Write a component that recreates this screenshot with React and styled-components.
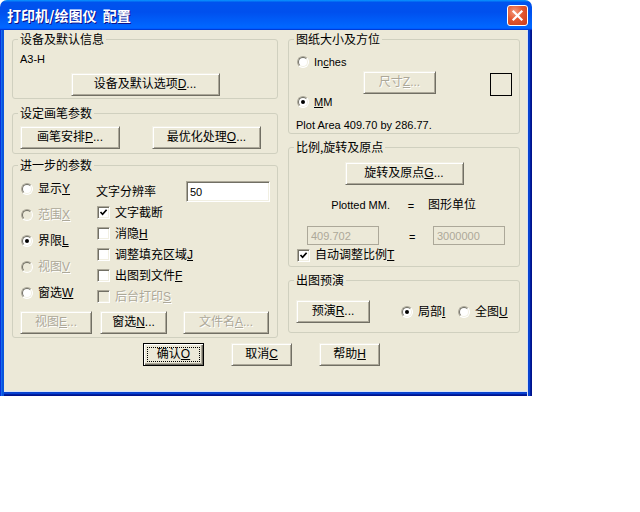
import React from 'react';
import styled, { createGlobalStyle, css } from 'styled-components';

const GlobalStyle = createGlobalStyle`
  html, body { margin: 0; padding: 0; background: #ffffff; }
  body {
    font-family: "Liberation Sans", "Noto Sans CJK SC", sans-serif;
    font-size: 12px;
    line-height: 14px;
    color: #000;
  }
  * { box-sizing: border-box; }
  u { text-underline-offset: 1px; }
`;

const Window = styled.div`
  width: 532px;
  height: 396px;
  display: flex;
  flex-direction: column;
  background: #ece9d8;
  border-radius: 7px 7px 0 0;
  overflow: hidden;
`;

const TitleBar = styled.div`
  height: 30px;
  flex: none;
  display: flex;
  align-items: center;
  justify-content: space-between;
  padding: 0 4px 0 7px;
  background: linear-gradient(180deg, #0997ff, #0053ee 8%, #0050ee 40%, #0066ff 88%, #0066ff 93%, #005bff 95%, #003dd7 96%, #003dd7);
`;

const Title = styled.div`
  font-family: "Noto Sans CJK SC", sans-serif;
  font-weight: 700;
  font-size: 14px;
  color: #fff;
  white-space: pre;
  text-shadow: 1px 1px 0 #0f1089;
`;

const CloseButton = styled.div`
  width: 21px;
  height: 21px;
  border: 1px solid #fff;
  border-radius: 3px;
  display: flex;
  align-items: center;
  justify-content: center;
  background: radial-gradient(circle at 35% 30%, #f39a7c 0%, #e4572f 45%, #c93b1b 100%);
`;

const Body = styled.div`
  flex: 1;
  padding: 2px 12px 0 12px;
  box-shadow:
    inset 1px 0 #0831d9, inset 2px 0 #166aee, inset 4px 0 #0855dd,
    inset -1px 0 #00138c, inset -2px 0 #001ea0, inset -4px 0 #0842d0, inset -5px 0 #d8e2f6,
    inset 0 -1px #00138c, inset 0 -2px #001ea0, inset 0 -4px #0842d0, inset 0 -5px #d8e2f6;
`;

const Columns = styled.div`
  display: grid;
  grid-template-columns: 266px 232px;
  column-gap: 10px;
  align-items: start;
`;

const Column = styled.div`
  display: flex;
  flex-direction: column;
`;

const Group = styled.fieldset`
  margin: ${p => p.$mt || 0}px 0 0 0;
  padding: 0 7px ${p => p.$pb || 0}px 7px;
  border: 1px solid #d0d0bf;
  border-radius: 3px;
  min-width: 0;
`;

const Legend = styled.legend`
  padding: 0 2px;
  margin-left: -2px;
  font-size: 12px;
  line-height: 14px;
  font-family: "Noto Sans CJK SC", sans-serif;
`;

const Text = styled.div`
  margin-top: ${p => p.$mt || 0}px;
  font-size: ${p => (p.$latin ? 11 : 12)}px;
  line-height: 14px;
  white-space: nowrap;
`;

const Button = styled.button`
  position: relative;
  display: flex;
  align-items: center;
  justify-content: center;
  flex: none;
  width: ${p => p.$w}px;
  height: 23px;
  margin: ${p => p.$mt || 0}px ${p => (p.$center ? 'auto' : '0')} 0 ${p => (p.$center ? 'auto' : `${p.$ml || 0}px`)};
  padding: 0 0 1px 0;
  font-family: "Liberation Sans", "Noto Sans CJK SC", sans-serif;
  font-size: 12px;
  line-height: 14px;
  white-space: nowrap;
  color: #000;
  background: #ece9d8;
  border: 1px solid;
  border-color: #f1efe2 #716f64 #716f64 #f1efe2;
  box-shadow: inset 1px 1px #ffffff, inset -1px -1px #aca899;
  border-radius: 0;
  ${p => p.disabled && css`
    color: #aca899;
    text-shadow: 1px 1px 0 #ffffff;
  `}
  ${p => p.$default && css`
    border: 1px solid #000;
    box-shadow: inset 1px 1px #ffffff, inset -1px -1px #716f64, inset -2px -2px #aca899;
    &::after {
      content: "";
      position: absolute;
      inset: 3px;
      border: 1px dotted #000;
    }
  `}
`;

const ButtonRow = styled.div`
  display: flex;
  gap: ${p => p.$gap || 0}px;
  margin-top: ${p => p.$mt || 0}px;
`;

const Row = styled.div`
  display: flex;
  align-items: center;
  height: ${p => p.$h || 14}px;
  width: ${p => (p.$w ? `${p.$w}px` : 'auto')};
  margin-top: ${p => p.$mt || 0}px;
  margin-left: ${p => p.$ml || 0}px;
  flex: none;
  white-space: nowrap;
  color: ${p => (p.$disabled ? '#aca899' : '#000')};
  text-shadow: ${p => (p.$disabled ? '1px 1px 0 #fff' : 'none')};
  font-size: ${p => (p.$latin ? 11 : 12)}px;
`;

const RadioCircle = styled.span`
  position: relative;
  flex: none;
  width: 12px;
  height: 12px;
  margin: 0 5px 0 1px;
  border-radius: 50%;
  border: 1px solid;
  border-color: #aca899 #ffffff #ffffff #aca899;
  background: ${p => (p.$disabled ? '#ece9d8' : '#ffffff')};
  &::before {
    content: "";
    position: absolute;
    inset: 0;
    border-radius: 50%;
    border: 1px solid;
    border-color: #716f64 #f1efe2 #f1efe2 #716f64;
  }
  ${p => p.$checked && css`
    &::after {
      content: "";
      position: absolute;
      left: 3px;
      top: 3px;
      width: 4px;
      height: 4px;
      border-radius: 50%;
      background: #000;
    }
  `}
`;

const CheckBox = styled.span`
  position: relative;
  flex: none;
  width: 13px;
  height: 13px;
  margin: 0 5px 0 1px;
  border: 1px solid;
  border-color: #aca899 #ffffff #ffffff #aca899;
  box-shadow: inset 1px 1px #716f64, inset -1px -1px #f1efe2;
  background: ${p => (p.$disabled ? '#ece9d8' : '#ffffff')};
  display: flex;
  align-items: center;
  justify-content: center;
`;

const Check = () => (
  <svg width="9" height="9" viewBox="0 0 9 9">
    <path d="M1.5 4 L3.6 6.3 L7.6 1.8" fill="none" stroke="#000" strokeWidth="1.7" />
  </svg>
);

const ParamGrid = styled.div`
  display: grid;
  grid-template-columns: 76px 1fr;
  align-items: start;
`;

const Stack = styled.div`
  display: flex;
  flex-direction: column;
  margin-top: ${p => p.$mt || 0}px;
`;

const FieldRow = styled.div`
  display: flex;
  align-items: center;
  justify-content: space-between;
  height: 21px;
`;

const TextBox = styled.input`
  width: ${p => p.$w}px;
  height: ${p => p.$h || 19}px;
  padding: 0 3px;
  margin: 0;
  font-family: "Liberation Sans", sans-serif;
  font-size: 11px;
  color: #000;
  background: #ffffff;
  border: 1px solid;
  border-color: #aca899 #ffffff #ffffff #aca899;
  box-shadow: inset 1px 1px #716f64, inset -1px -1px #f1efe2;
  outline: none;
  &:disabled {
    color: #aca899;
    background: #ece9d8;
    border: 1px solid #aca899;
    box-shadow: none;
  }
`;

const SizeRow = styled.div`
  display: flex;
  align-items: flex-start;
  margin-top: 2px;
`;

const PaperBox = styled.div`
  width: 22px;
  height: 23px;
  margin: 2px 0 0 auto;
  border: 1px solid #000;
`;

const RatioHeader = styled.div`
  display: grid;
  grid-template-columns: 102px 26px auto;
  align-items: center;
  height: 14px;
  margin-top: ${p => p.$mt || 0}px;
`;

const RatioInputs = styled.div`
  display: grid;
  grid-template-columns: 72px 54px 72px;
  align-items: center;
  padding-left: 11px;
  margin-top: ${p => p.$mt || 0}px;
`;

const RightText = styled.span`
  justify-self: end;
  padding-right: 8px;
  font-size: 11px;
`;

const Eq = styled.span`
  justify-self: ${p => (p.$start ? 'start' : 'center')};
  padding-left: ${p => p.$pl || 0}px;
  font-size: 11px;
  padding-top: 2px;
`;

const Plain = styled.span`
  padding-left: ${p => p.$pl || 0}px;
`;

const PreviewRow = styled.div`
  display: flex;
  align-items: center;
  margin-top: ${p => p.$mt || 0}px;
`;

const Footer = styled.div`
  display: flex;
  gap: 27px;
  margin-top: 5px;
  padding-left: 131px;
`;

export default function App() {
  return (
    <>
      <GlobalStyle />
      <Window>
        <TitleBar>
          <Title>打印机/绘图仪  配置</Title>
          <CloseButton>
            <svg width="13" height="13" viewBox="0 0 13 13">
              <path d="M2.5 2.5 L10.5 10.5 M10.5 2.5 L2.5 10.5" stroke="#fff" strokeWidth="2.2" strokeLinecap="square" />
            </svg>
          </CloseButton>
        </TitleBar>
        <Body>
          <Columns>
            <Column>
              <Group $pb={2}>
                <Legend>设备及默认信息</Legend>
                <Text $latin $mt={6}>A3-H</Text>
                <Button $w={149} $mt={7} $center>设备及默认选项<u>D</u>...</Button>
              </Group>
              <Group $mt={7} $pb={4}>
                <Legend>设定画笔参数</Legend>
                <ButtonRow $gap={32} $mt={6}>
                  <Button $w={100}>画笔安排<u>P</u>...</Button>
                  <Button $w={109}>最优化处理<u>O</u>...</Button>
                </ButtonRow>
              </Group>
              <Group $mt={4} $pb={3}>
                <Legend>进一步的参数</Legend>
                <ParamGrid>
                  <Stack $mt={4}>
                    <Row $h={26}><RadioCircle />显示<u>Y</u></Row>
                    <Row $h={26} $disabled><RadioCircle $disabled />范围<u>X</u></Row>
                    <Row $h={26}><RadioCircle $checked />界限<u>L</u></Row>
                    <Row $h={26} $disabled><RadioCircle $disabled />视图<u>V</u></Row>
                    <Row $h={26}><RadioCircle />窗选<u>W</u></Row>
                  </Stack>
                  <Stack $mt={9}>
                    <FieldRow>
                      <span>文字分辨率</span>
                      <TextBox $w={84} $h={21} defaultValue="50" readOnly />
                    </FieldRow>
                    <Row $h={21}><CheckBox><Check /></CheckBox>文字截断</Row>
                    <Row $h={21}><CheckBox />消隐<u>H</u></Row>
                    <Row $h={21}><CheckBox />调整填充区域<u>J</u></Row>
                    <Row $h={21}><CheckBox />出图到文件<u>F</u></Row>
                    <Row $h={21} $disabled><CheckBox $disabled />后台打印<u>S</u></Row>
                  </Stack>
                </ParamGrid>
                <ButtonRow $mt={4}>
                  <Button $w={72} disabled>视图<u>E</u>...</Button>
                  <Button $w={67} $ml={8}>窗选<u>N</u>...</Button>
                  <Button $w={86} $ml={16} disabled>文件名<u>A</u>...</Button>
                </ButtonRow>
              </Group>
            </Column>
            <Column>
              <Group $pb={1}>
                <Legend>图纸大小及方位</Legend>
                <Row $mt={9} $latin><RadioCircle />In<u>c</u>hes</Row>
                <SizeRow>
                  <Button $w={73} $ml={67} disabled>尺寸<u>Z</u>...</Button>
                  <PaperBox />
                </SizeRow>
                <Row $mt={-1} $latin><RadioCircle $checked /><u>M</u>M</Row>
                <Text $latin $mt={9}>Plot Area 409.70 by 286.77.</Text>
              </Group>
              <Group $mt={6} $pb={4}>
                <Legend>比例,旋转及原点</Legend>
                <Button $w={119} $mt={8} $center>旋转及原点<u>G</u>...</Button>
                <RatioHeader $mt={12}>
                  <RightText>Plotted MM.</RightText>
                  <Eq>=</Eq>
                  <Plain $pl={4}>图形单位</Plain>
                </RatioHeader>
                <RatioInputs $mt={15}>
                  <TextBox $w={72} defaultValue="409.702" disabled />
                  <Eq $start $pl={30}>=</Eq>
                  <TextBox $w={72} defaultValue="3000000" disabled />
                </RatioInputs>
                <Row $mt={3}><CheckBox><Check /></CheckBox>自动调整比例<u>T</u></Row>
              </Group>
              <Group $mt={6} $pb={9}>
                <Legend>出图预演</Legend>
                <PreviewRow $mt={13}>
                  <Button $w={74}>预演<u>R</u>...</Button>
                  <Row $ml={30} $w={57}><RadioCircle $checked />局部<u>I</u></Row>
                  <Row><RadioCircle />全图<u>U</u></Row>
                </PreviewRow>
              </Group>
            </Column>
          </Columns>
          <Footer>
            <Button $w={61} $default>确认<u>O</u></Button>
            <Button $w={61}>取消<u>C</u></Button>
            <Button $w={61}>帮助<u>H</u></Button>
          </Footer>
        </Body>
      </Window>
    </>
  );
}
